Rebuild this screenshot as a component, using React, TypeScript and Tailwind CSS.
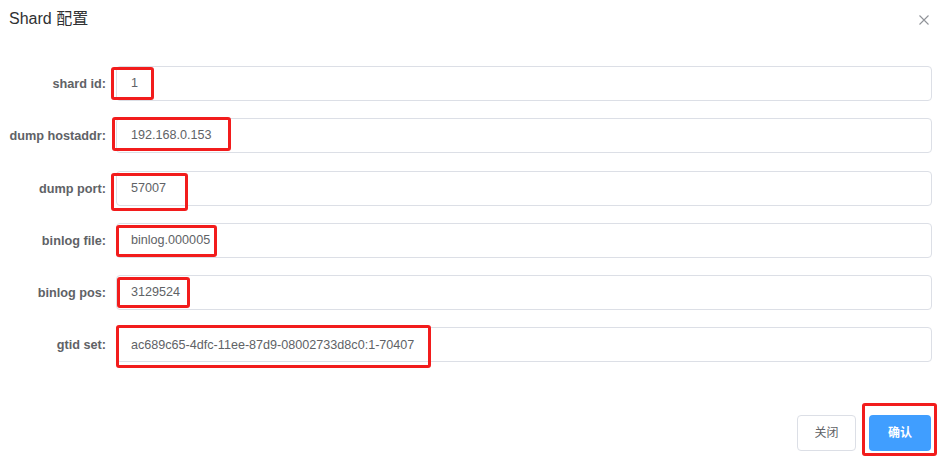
import React from "react";

const rows = [
  { label: "shard id:", value: "1", box: { l: -5, t: 1, w: 43, h: 33 } },
  { label: "dump hostaddr:", value: "192.168.0.153", box: { l: -4, t: -1, w: 119, h: 34 } },
  { label: "dump port:", value: "57007", box: { l: -5, t: 2, w: 77, h: 38 } },
  { label: "binlog file:", value: "binlog.000005", box: { l: 0, t: 2, w: 101, h: 32 } },
  { label: "binlog pos:", value: "3129524", box: { l: 1, t: 2, w: 73, h: 31 } },
  { label: "gtid set:", value: "ac689c65-4dfc-11ee-87d9-08002733d8c0:1-70407", box: { l: 0, t: -2, w: 315, h: 43 } },
];

export default function App() {
  return (
    <div
      className="w-[942px] h-[464px] bg-white relative overflow-hidden"
      style={{ fontFamily: '"Liberation Sans", Arial, "Noto Sans CJK SC", sans-serif' }}
    >
      <div className="flex items-center justify-between pl-[9px] pr-[13px] pt-[9px] h-[29px]">
        <span className="text-[16px] text-[#303133] leading-[20px]">Shard 配置</span>
        <svg width="10" height="10" viewBox="0 0 10 10" className="mt-[1px]">
          <path d="M0.5 0.5 L9.5 9.5 M9.5 0.5 L0.5 9.5" stroke="#909399" strokeWidth="1.1" />
        </svg>
      </div>
      <div className="flex flex-col gap-[17.3px] pt-[37px] pr-[10px]">
        {rows.map((r) => (
          <div key={r.label} className="flex items-center h-[35px]">
            <div className="w-[106px] pt-[2px] text-right text-[12.7px] font-bold text-[#606266] shrink-0">
              {r.label}
            </div>
            <div className="relative flex-1 ml-[10px] h-[35px]">
              <div className="h-full border border-[#dcdfe6] rounded-[4px] flex items-center pl-[14px] text-[12.6px] text-[#606266]">
                {r.value}
              </div>
              <div
                className="absolute border-[3px] border-[#f21c1c] rounded-[3px] pointer-events-none"
                style={{ left: r.box.l, top: r.box.t, width: r.box.w, height: r.box.h }}
              />
            </div>
          </div>
        ))}
      </div>
      <div className="absolute right-[11px] top-[415px] flex gap-[13px]">
        <button className="w-[59px] h-[36px] border border-[#dcdfe6] rounded-[4px] text-[12px] text-[#606266] bg-white">
          关闭
        </button>
        <div className="relative">
          <button className="w-[62px] h-[36px] rounded-[4px] text-[12px] font-bold text-white bg-[#409eff]">
            确认
          </button>
          <div className="absolute left-[-7px] top-[-12px] w-[75px] h-[53px] border-[3px] border-[#f21c1c] rounded-[3px] pointer-events-none" />
        </div>
      </div>
    </div>
  );
}
